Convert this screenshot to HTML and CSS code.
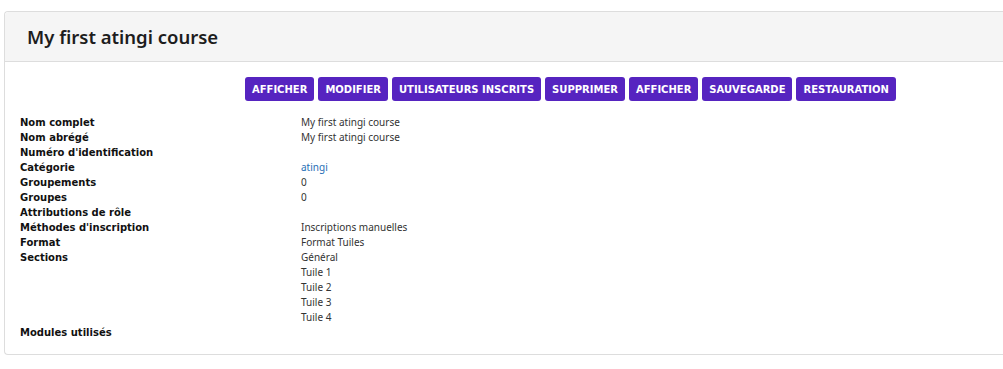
FILE: index.html
```html
<!doctype html>
<html lang="fr">
  <head>
    <meta charset="UTF-8" />
    <meta name="viewport" content="width=device-width, initial-scale=1.0" />
    <title>My first atingi course</title>
    <link rel="stylesheet" href="styles.css">
  </head>
  <body>
    <div class="card">
      <div class="card-header">
        <h2>My first atingi course</h2>
      </div>

      <div class="card-body">
        <!-- Actions -->
        <div class="actions">
          <button>Afficher</button>
          <button>Modifier</button>
          <button>Utilisateurs inscrits</button>
          <button>Supprimer</button>
          <button>Afficher</button>
          <button>Sauvegarde</button>
          <button>Restauration</button>
        </div>

        <!-- Details du cours -->
        <dl class="details">
          <dt>Nom complet</dt>
          <dd>My first atingi course</dd>
          <dt>Nom abrégé</dt>
          <dd>My first atingi course</dd>
          <dt>Numéro d'identification</dt>
          <dd></dd>
          <dt>Catégorie</dt>
          <dd><a href="#">atingi</a></dd>
          <dt>Groupements</dt>
          <dd>0</dd>
          <dt>Groupes</dt>
          <dd>0</dd>
          <dt>Attributions de rôle</dt>
          <dd></dd>
          <dt>Méthodes d'inscription</dt>
          <dd>Inscriptions manuelles</dd>
          <dt>Format</dt>
          <dd>Format Tuiles</dd>
          <dt>Sections</dt>
          <dd>
            <div>Général</div>
            <div>Tuile 1</div>
            <div>Tuile 2</div>
            <div>Tuile 3</div>
            <div>Tuile 4</div>
          </dd>
          <dt>Modules utilisés</dt>
          <dd></dd>
        </dl>
      </div>
    </div>
  </body>
</html>
```

FILE: styles.css
```css
* {
  margin: 0;
  padding: 0;
  box-sizing: border-box;
}
body {
  font-family: "Noto Sans", Arial, sans-serif;
  color: #333;
  background: #fff;
  padding: 11px 0 0 4px;
  overflow: hidden;
}
.card {
  border: 1px solid #ddd;
  border-right: none;
  border-radius: 4px 0 0 4px;
  background: #fff;
}
.card-header {
  height: 50px;
  background: #f5f5f5;
  border-bottom: 1px solid #ddd;
  border-radius: 4px 0 0 0;
  padding: 0 22px;
  display: flex;
  align-items: center;
}
.card-header h2 {
  font-size: 18.5px;
  font-weight: 600;
  color: #1d1d1d;
}
.card-body {
  padding: 15px 0 14px 15px;
}
.actions {
  display: flex;
  gap: 4px;
  margin-left: 225px;
  margin-bottom: 14px;
}
.actions button {
  font-family: "DejaVu Sans", sans-serif;
  font-weight: bold;
  font-size: 10px;
  text-transform: uppercase;
  color: #fff;
  background: #5624c0;
  border: none;
  border-radius: 3px;
  height: 24px;
  padding: 0 7px;
}
.details {
  display: grid;
  grid-template-columns: 281px 1fr;
  font-size: 10px;
  line-height: 15px;
}
.details dt {
  font-family: "DejaVu Sans", sans-serif;
  font-weight: bold;
  color: #111;
}
.details dd {
  color: #333;
}
.details a {
  color: #1f6fb5;
  text-decoration: none;
}
```
